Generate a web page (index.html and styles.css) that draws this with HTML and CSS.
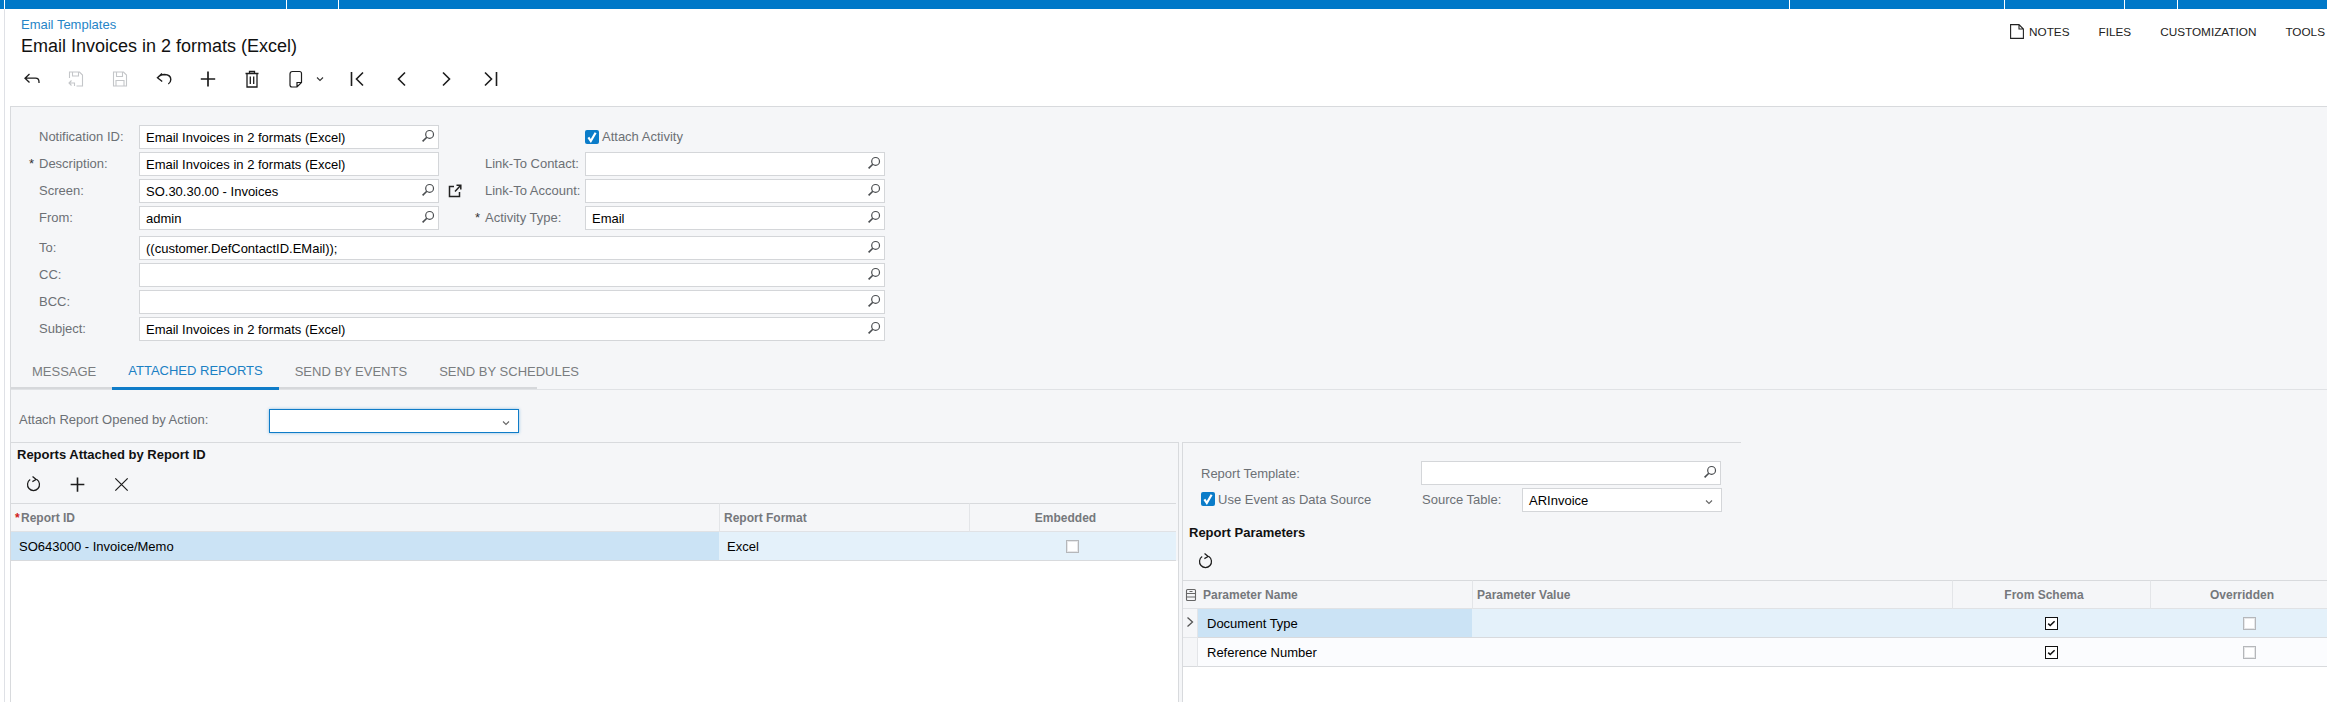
FILE: index.html
```html
<!DOCTYPE html>
<html lang="en">
<head>
<meta charset="utf-8">
<title>Email Templates</title>
<link rel="stylesheet" href="styles.css">
</head>
<body>
<svg class="sprite" xmlns="http://www.w3.org/2000/svg">
  <symbol id="i-search" viewBox="0 0 14 14"><circle cx="8.6" cy="5.4" r="3.9" fill="none" stroke="currentColor" stroke-width="1.2"/><path d="M5.8 8.2 1.6 12.4" fill="none" stroke="currentColor" stroke-width="1.6"/></symbol>
  <symbol id="i-check" viewBox="0 0 14 14"><path d="M3.4 7.4 5.8 11 10.6 2.8" fill="none" stroke="currentColor" stroke-width="2.2"/></symbol>
  <symbol id="i-tick" viewBox="0 0 12 12"><path d="M2.4 6.2 4.6 8.2 9.4 3.6" fill="none" stroke="currentColor" stroke-width="1.7"/></symbol>
  <symbol id="i-caret" viewBox="0 0 10 10"><path d="M2 3.5 5 6.5 8 3.5" fill="none" stroke="currentColor" stroke-width="1.1"/></symbol>
  <symbol id="i-back" viewBox="0 0 20 20"><path d="M7.5 5 3 9.2 7.5 13.4M3 9.2H13.5Q17 9.2 17 13V14" fill="none" stroke="currentColor" stroke-width="1.3"/></symbol>
  <symbol id="i-saveback" viewBox="0 0 20 20"><path d="M3.5 9V3H13.5L16.5 6V17H10.5M6.5 3V7H12.5V3M5.5 11.5 3 14 5.5 16.5M3 14H8.5V17" fill="none" stroke="currentColor" stroke-width="1.1"/></symbol>
  <symbol id="i-save" viewBox="0 0 20 20"><path d="M3.5 3H13.5L16.5 6V17H3.5ZM6.5 3V7.5H12.5V3M6 17V11.5H14V17" fill="none" stroke="currentColor" stroke-width="1.1"/></symbol>
  <symbol id="i-undo" viewBox="0 0 20 20"><path d="M8 4.5 3.5 8.8 8.2 12.5M3.5 8.8Q6 5.5 10.5 5.5 16.8 5.800 16.8 10.5 16.8 13.5 14.3 15" fill="none" stroke="currentColor" stroke-width="1.4"/></symbol>
  <symbol id="i-plus" viewBox="0 0 20 20"><path d="M10 2.5V17.5M2.8 10H17.2" fill="none" stroke="currentColor" stroke-width="1.7"/></symbol>
  <symbol id="i-trash" viewBox="0 0 20 20"><path d="M3.5 4.5H16.5M7.5 4.5V2.500H12.5V4.5M5 4.5V18H15V4.5M8.3 7.5V15M11.7 7.5V15" fill="none" stroke="currentColor" stroke-width="1.3"/></symbol>
  <symbol id="i-clip" viewBox="0 0 20 20"><path d="M6.5 2.5H13.5Q15.5 2.5 15.5 4.5V13.5L11 18H6Q4 18 4 16V5Q4 2.5 6.5 2.5ZM15.5 13.5H11V18" fill="none" stroke="currentColor" stroke-width="1.2"/></symbol>
  <symbol id="i-first" viewBox="0 0 20 20"><path d="M3.5 3V17M15 3.5 8.5 10 15 16.5" fill="none" stroke="currentColor" stroke-width="1.6"/></symbol>
  <symbol id="i-prev" viewBox="0 0 20 20"><path d="M13 3.5 6.5 10 13 16.5" fill="none" stroke="currentColor" stroke-width="1.6"/></symbol>
  <symbol id="i-next" viewBox="0 0 20 20"><path d="M7 3.5 13.5 10 7 16.5" fill="none" stroke="currentColor" stroke-width="1.6"/></symbol>
  <symbol id="i-last" viewBox="0 0 20 20"><path d="M16.5 3V17M5 3.5 11.5 10 5 16.5" fill="none" stroke="currentColor" stroke-width="1.6"/></symbol>
  <symbol id="i-refresh" viewBox="0 0 20 20"><path d="M6.5 4.8A6.3 6.3 0 1 0 13.5 4.8M9 1.5 12.8 4.7 8.8 7" fill="none" stroke="currentColor" stroke-width="1.3"/></symbol>
  <symbol id="i-close" viewBox="0 0 20 20"><path d="M3.5 3.5 16.5 16.5M16.5 3.5 3.5 16.5" fill="none" stroke="currentColor" stroke-width="1.3"/></symbol>
  <symbol id="i-ext" viewBox="0 0 14 14"><path d="M6 2.500H1.5V12.5H11.5V8M7 7.5 12.5 1.5M8.5 1.2H12.8V5.5" fill="none" stroke="currentColor" stroke-width="1.5"/></symbol>
  <symbol id="i-note" viewBox="0 0 14 15"><path d="M.6.6H9L13.4 5V14.4H.6ZM9 .6V5H13.4" fill="none" stroke="currentColor" stroke-width="1.1"/></symbol>
  <symbol id="i-columns" viewBox="0 0 12 14"><path d="M2.5 1.5H9.5Q10.500 1.500 10.500 2.500V11.500Q10.500 12.500 9.500 12.500H2.500Q1.500 12.500 1.500 11.500V2.500Q1.500 1.500 2.500 1.500ZM1.500 5.500H10.500M1.500 9H10.500M4.500 3.500H7.500" fill="none" stroke="currentColor" stroke-width="1.1"/></symbol>
  <symbol id="i-chevron" viewBox="0 0 10 12"><path d="M2.5 1.5 7.5 6 2.5 10.5" fill="none" stroke="currentColor" stroke-width="1.3"/></symbol>
</svg>

<div class="topbar">
  <span class="seg seg-a"></span><span class="seg seg-b"></span><span class="seg seg-c"></span><span class="seg seg-d"></span><span class="seg seg-e"></span><span class="seg seg-f"></span><span class="seg seg-g"></span><span class="seg seg-h"></span>
</div>

<div class="main">
  <header class="header">
    <div class="header-top">
      <div class="titles">
        <div class="crumb">Email Templates</div>
        <div class="title">Email Invoices in 2 formats (Excel)</div>
      </div>
      <nav class="links">
        <span class="link"><svg class="note-icon"><use href="#i-note"/></svg>NOTES</span>
        <span class="link">FILES</span>
        <span class="link">CUSTOMIZATION</span>
        <span class="link">TOOLS</span>
      </nav>
    </div>
    <div class="toolbar main-toolbar">
      <span class="tb"><svg class="ic"><use href="#i-back"/></svg></span>
      <span class="tb off"><svg class="ic"><use href="#i-saveback"/></svg></span>
      <span class="tb off"><svg class="ic"><use href="#i-save"/></svg></span>
      <span class="tb"><svg class="ic"><use href="#i-undo"/></svg></span>
      <span class="tb"><svg class="ic"><use href="#i-plus"/></svg></span>
      <span class="tb"><svg class="ic"><use href="#i-trash"/></svg></span>
      <span class="tb"><svg class="ic"><use href="#i-clip"/></svg></span>
      <span class="tb-caret"><svg class="caret"><use href="#i-caret"/></svg></span>
      <span class="tb"><svg class="ic"><use href="#i-first"/></svg></span>
      <span class="tb"><svg class="ic"><use href="#i-prev"/></svg></span>
      <span class="tb"><svg class="ic"><use href="#i-next"/></svg></span>
      <span class="tb"><svg class="ic"><use href="#i-last"/></svg></span>
    </div>
  </header>

  <section class="panel">
    <div class="form-top">
      <label class="lbl"><i class="star"></i>Notification ID:</label>
      <div class="field"><span class="val">Email Invoices in 2 formats (Excel)</span><svg class="search"><use href="#i-search"/></svg></div>
      <div class="mid"></div>
      <div class="check-line"><span class="cb-on"><svg><use href="#i-check"/></svg></span><span class="lbl-text">Attach Activity</span></div>

      <label class="lbl"><i class="star">*</i>Description:</label>
      <div class="field"><span class="val">Email Invoices in 2 formats (Excel)</span></div>
      <div class="mid"><span class="lbl-text mid-label">Link-To Contact:</span></div>
      <div class="field"><svg class="search"><use href="#i-search"/></svg></div>

      <label class="lbl"><i class="star"></i>Screen:</label>
      <div class="field"><span class="val">SO.30.30.00 - Invoices</span><svg class="search"><use href="#i-search"/></svg></div>
      <div class="mid"><svg class="ext"><use href="#i-ext"/></svg><span class="lbl-text mid-label after-ext">Link-To Account:</span></div>
      <div class="field"><svg class="search"><use href="#i-search"/></svg></div>

      <label class="lbl"><i class="star"></i>From:</label>
      <div class="field"><span class="val">admin</span><svg class="search"><use href="#i-search"/></svg></div>
      <div class="mid"><i class="star mid-star">*</i><span class="lbl-text">Activity Type:</span></div>
      <div class="field"><span class="val">Email</span><svg class="search"><use href="#i-search"/></svg></div>
    </div>

    <div class="form-wide">
      <label class="lbl"><i class="star"></i>To:</label>
      <div class="field"><span class="val">((customer.DefContactID.EMail));</span><svg class="search"><use href="#i-search"/></svg></div>
      <label class="lbl"><i class="star"></i>CC:</label>
      <div class="field"><svg class="search"><use href="#i-search"/></svg></div>
      <label class="lbl"><i class="star"></i>BCC:</label>
      <div class="field"><svg class="search"><use href="#i-search"/></svg></div>
      <label class="lbl"><i class="star"></i>Subject:</label>
      <div class="field"><span class="val">Email Invoices in 2 formats (Excel)</span><svg class="search"><use href="#i-search"/></svg></div>
    </div>

    <div class="tabs">
      <span class="tab">MESSAGE</span>
      <span class="tab active">ATTACHED REPORTS</span>
      <span class="tab">SEND BY EVENTS</span>
      <span class="tab">SEND BY SCHEDULES</span>
    </div>

    <div class="action-row">
      <span class="lbl-text action-label">Attach Report Opened by Action:</span>
      <div class="field select focused"><svg class="caret"><use href="#i-caret"/></svg></div>
    </div>

    <div class="split">
      <div class="left">
        <div class="section-title">Reports Attached by Report ID</div>
        <div class="toolbar sub-toolbar">
          <span class="tb"><svg class="ic"><use href="#i-refresh"/></svg></span>
          <span class="tb"><svg class="ic"><use href="#i-plus"/></svg></span>
          <span class="tb"><svg class="ic"><use href="#i-close"/></svg></span>
        </div>
        <div class="grid grid-left">
          <div class="th"><i class="req">*</i>Report ID</div>
          <div class="th sep">Report Format</div>
          <div class="th sep center">Embedded</div>
          <div class="td sel first-cell">SO643000 - Invoice/Memo</div>
          <div class="td cur sep-t excel">Excel</div>
          <div class="td cur"><span class="cb"></span></div>
        </div>
        <div class="blank"></div>
      </div>

      <div class="right">
        <div class="right-rule"></div>
        <div class="right-form">
          <div class="rf-row">
            <span class="lbl-text rf-label">Report Template:</span>
            <div class="field rf-field"><svg class="search"><use href="#i-search"/></svg></div>
          </div>
          <div class="rf-row">
            <div class="check-line rf-check"><span class="cb-on"><svg><use href="#i-check"/></svg></span><span class="lbl-text">Use Event as Data Source</span></div>
            <span class="lbl-text rf-source">Source Table:</span>
            <div class="field select rf-select"><span class="val">ARInvoice</span><svg class="caret"><use href="#i-caret"/></svg></div>
          </div>
        </div>
        <div class="section-title right-title">Report Parameters</div>
        <div class="toolbar right-toolbar">
          <span class="tb"><svg class="ic"><use href="#i-refresh"/></svg></span>
        </div>
        <div class="grid grid-right">
          <div class="th gutter"><svg class="columns"><use href="#i-columns"/></svg></div>
          <div class="th name-head">Parameter Name</div>
          <div class="th sep">Parameter Value</div>
          <div class="th sep center">From Schema</div>
          <div class="th sep center">Overridden</div>

          <div class="td gutter-cell"><svg class="chev"><use href="#i-chevron"/></svg></div>
          <div class="td sel name-cell">Document Type</div>
          <div class="td cur"></div>
          <div class="td cur"><span class="cb on"><svg><use href="#i-tick"/></svg></span></div>
          <div class="td cur"><span class="cb"></span></div>

          <div class="td gutter-cell last"></div>
          <div class="td alt name-cell last">Reference Number</div>
          <div class="td alt last"></div>
          <div class="td alt last"><span class="cb on"><svg><use href="#i-tick"/></svg></span></div>
          <div class="td alt last"><span class="cb"></span></div>
        </div>
        <div class="blank"></div>
      </div>
    </div>
  </section>
</div>
</body>
</html>
```

FILE: styles.css
```css
* { box-sizing: border-box; }
html, body { margin: 0; padding: 0; height: 100%; overflow: hidden; background: #fff; }
body {
  width: 2327px;
  height: 702px;
  display: flex;
  flex-direction: column;
  font-family: "Liberation Sans", Arial, sans-serif;
  font-size: 13px;
  color: #000;
}
.sprite { display: none; }

/* top bar */
.topbar {
  flex: none;
  height: 9px;
  display: grid;
  grid-template-columns: 5px 282px 52px 1451px 215px 120px 53px 1fr;
  background: #0078c8;
}
.seg { border-right: 1px solid #fff; }
.seg-h { border-right: 0; }

/* main */
.main {
  flex: 1;
  min-height: 0;
  margin-left: 4px;
  border-left: 1px solid #dfe1e6;
  display: flex;
  flex-direction: column;
}
.header { flex: none; height: 97px; }
.header-top { display: flex; justify-content: space-between; padding: 8px 0 0 16px; }
.crumb { font-size: 13px; line-height: 16px; color: #2685c7; }
.title { font-size: 18px; line-height: 22px; margin-top: 2px; color: #111; }
.links { display: flex; gap: 29px; height: 26px; padding-top: 3px; line-height: 14px; margin-right: 2px; }
.link { font-size: 11.75px; color: #222; display: flex; align-items: center; }
.note-icon { width: 14px; height: 15px; margin-right: 5px; color: #222; }

.toolbar { display: flex; align-items: center; }
.main-toolbar { height: 30px; margin: 7px 0 0 5px; }
.tb { width: 44px; height: 30px; display: flex; align-items: center; justify-content: center; color: #1d1d1d; }
.tb.off { color: #c4c6c9; }
.ic { width: 20px; height: 20px; }
.tb-caret { width: 18px; margin-left: -3px; margin-right: 3px; display: flex; color: #333; }
.caret { width: 10px; height: 10px; }

/* panel */
.panel {
  flex: 1;
  min-height: 0;
  margin-left: 5px;
  border-top: 1px solid #d8dadd;
  border-left: 1px solid #d8dadd;
  background: #f5f6f8;
  display: flex;
  flex-direction: column;
}
.form-top {
  margin-top: 18px;
  display: grid;
  grid-template-columns: 128px 300px 146px 300px;
  grid-auto-rows: 24px;
  row-gap: 3px;
}
.form-wide {
  margin-top: 6px;
  display: grid;
  grid-template-columns: 128px 746px;
  grid-auto-rows: 24px;
  row-gap: 3px;
}
.lbl, .lbl-text { color: #6c7075; font-size: 13px; white-space: nowrap; }
.lbl { display: flex; align-items: center; padding-left: 19px; height: 23px; }
.star { width: 10px; margin-left: -1px; flex: none; font-style: normal; color: #333; font-size: 13px; line-height: 13px; }
.field {
  position: relative;
  display: flex;
  align-items: center;
  background: #fff;
  border: 1px solid #d4d6d9;
  padding-left: 6px;
  height: 24px;
}
.val { font-size: 13px; color: #000; white-space: nowrap; padding-top: 1px; }
.search { position: absolute; right: 3px; top: 3px; width: 14px; height: 14px; color: #4a4d50; }
.mid { display: flex; align-items: center; padding-left: 46px; height: 23px; }
.mid-star { margin-left: -10px; }
.ext { width: 14px; height: 14px; margin-left: -37px; margin-right: 23px; color: #222; flex: none; }
.check-line { display: flex; align-items: center; height: 23px; }
.check-line .lbl-text { margin-left: 3px; }
.cb-on {
  width: 14px;
  height: 14px;
  border-radius: 2px;
  background: #0b7cc9;
  color: #fff;
  display: block;
  flex: none;
}
.cb-on svg { width: 14px; height: 14px; display: block; }

/* tabs */
.tabs {
  flex: none;
  margin-top: 14px;
  padding-left: 4px;
  display: flex;
  border-bottom: 1px solid #e0e2e5;
  background: linear-gradient(#d6d8db, #d6d8db) no-repeat 0 100% / 526px 2px;
}
.tab {
  height: 35px;
  margin-bottom: -1px;
  padding: 9px 16px 0;
  line-height: 16px;
  font-size: 13px;
  color: #7a7d80;
  border-bottom: 3px solid transparent;
}
.tab:first-child { padding-left: 17px; }
.tab.active { color: #1b80c4; border-bottom-color: #0f7cc8; padding-top: 8px; }

/* action row */
.action-row { flex: none; height: 52px; display: flex; align-items: flex-start; padding: 19px 0 0 8px; }
.action-label { width: 250px; line-height: 22px; }
.select .caret { position: absolute; right: 7px; top: 8px; color: #666; }
.focused { width: 250px; border-color: #0f7cc8; box-shadow: 0 0 3px rgba(15, 124, 200, .45); }

/* split */
.split { flex: 1; min-height: 0; display: flex; }
.left {
  flex: none;
  width: 1168px;
  border-top: 1px solid #d8dadd;
  border-right: 1px solid #d8dadd;
  display: flex;
  flex-direction: column;
}
.right {
  flex: 1;
  min-width: 0;
  margin-left: 3px;
  border-left: 1px solid #d8dadd;
  display: flex;
  flex-direction: column;
}
.right-rule { flex: none; height: 1px; width: 558px; background: #d8dadd; }
.section-title { flex: none; font-weight: 700; font-size: 13px; line-height: 20px; height: 22px; padding: 2px 0 0 6px; color: #111; }
.sub-toolbar { flex: none; height: 38px; }
.sub-toolbar .ic, .right-toolbar .ic { width: 19px; height: 19px; }
.right-form { flex: none; padding: 18px 0 0 18px; display: flex; flex-direction: column; gap: 3px; }
.rf-row { display: flex; align-items: center; height: 24px; }
.rf-label { width: 220px; }
.rf-field { width: 300px; }
.rf-check { width: 221px; padding-bottom: 2px; }
.rf-source { width: 100px; padding-bottom: 2px; }
.rf-select { width: 200px; }
.rf-select .val { padding-top: 0; }
.right-title { margin-top: 9px; }
.right-toolbar { flex: none; height: 37px; }

/* grids */
.grid { flex: none; display: grid; grid-auto-rows: 29px; }
.grid-left { grid-template-columns: 708px 250px 207px; }
.grid-right { grid-template-columns: 15px 274px 480px 198px 198px; width: 1165px; }
.grid-right .td { padding-top: 1px; }
.th {
  display: flex;
  align-items: center;
  font-size: 12px;
  font-weight: 700;
  color: #75787c;
  border-top: 1px solid #d8dadd;
  border-bottom: 1px solid #e0e2e5;
  padding-left: 4px;
  white-space: nowrap;
}
.sep { border-left: 1px solid #e3e5e8; }
.center { justify-content: center; padding: 0 15px 0 0; }
.req { font-style: normal; color: #d02020; width: 5px; margin-right: 1px; }
.gutter { padding: 0; justify-content: center; color: #666; }
.columns { width: 12px; height: 14px; }
.name-head { padding-left: 5px; }
.td {
  display: flex;
  align-items: center;
  justify-content: center;
  font-size: 13px;
  border-bottom: 1px solid #d8dadd;
  white-space: nowrap;
}
.sel { background: #cbe3f5; justify-content: flex-start; }
.cur { background: #e4f1fa; }
.alt { background: #fbfcfe; }
.first-cell { padding-left: 8px; }
.excel { justify-content: flex-start; padding-left: 8px; }
.name-cell { padding-left: 9px; justify-content: flex-start; }
.gutter-cell { background: #f5f6f8; color: #555; border-bottom: 1px solid #e3e5e8; border-right: 1px solid #e3e5e8; }
.gutter-cell.last, .td.last { border-bottom-color: #d8dadd; }
.chev { width: 10px; height: 12px; margin-bottom: 3px; }
.cb { width: 13px; height: 13px; display: block; background: #fff; border: 1px solid #b5b7ba; box-shadow: inset 0 0 0 1px #e6e7e9; }
.cb.on { border: 1px solid #111; background: #fff; color: #111; box-shadow: none; }
.cb.on svg { width: 11px; height: 11px; display: block; }
.blank { flex: 1; background: #fff; }
```
